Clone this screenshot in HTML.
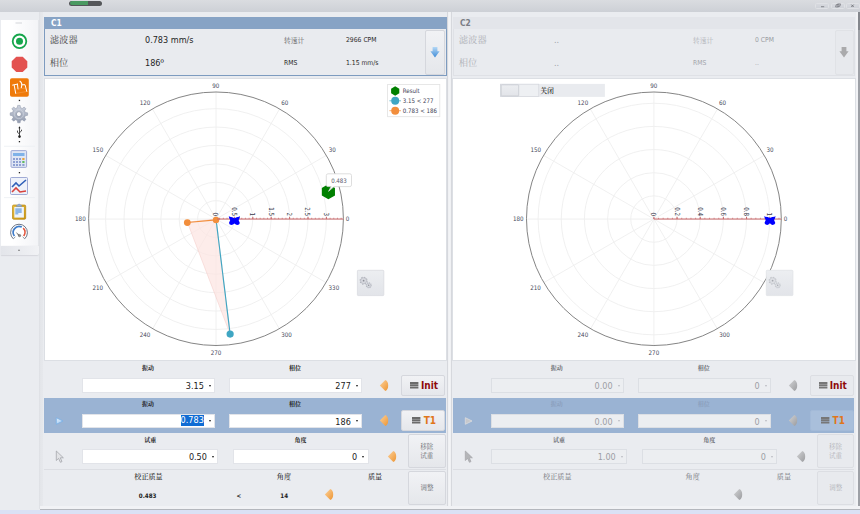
<!DOCTYPE html>
<html><head><meta charset="utf-8"><title>Balancing</title>
<style>
*{box-sizing:border-box;margin:0;padding:0}
html,body{width:860px;height:514px;overflow:hidden}
body{background:#eaecf0;font-family:"DejaVu Sans Condensed","Liberation Sans","Noto Serif CJK SC",sans-serif;font-size:10px;color:#1c1c1c;position:relative}
.abs{position:absolute}
.cjk{font-family:"Liberation Serif","Noto Serif CJK SC",serif}
#titlebar{left:0;top:0;width:860px;height:11.600px;background:linear-gradient(#dadce0,#cdd0d6)}
#pill{left:69px;top:0.900px;width:32.600px;height:4.900px;border-radius:2.500px;background:#55575a;overflow:hidden;box-shadow:0 0 1.500px #e4e6ea}
#pill i{position:absolute;left:0.800px;top:0.600px;width:18.300px;height:3.700px;background:#4b9a62;border-radius:2px 0 0 2px}
.wb{top:2.600px;height:6.300px;width:13.900px;border:0.800px solid #dfe1e5;border-radius:1.500px;background:linear-gradient(#d7d9de,#cfd2d8)}
#toolbar{left:1px;top:19.5px;width:37.500px;height:235.300px;border-radius:0 0 2px 0;background:linear-gradient(90deg,#ffffff 30%,#f3f4f7);border-right:1px solid #e4e6ea}
#tbfoot{left:1px;top:245.600px;width:37.500px;height:9.200px;background:linear-gradient(90deg,#e3e5ea,#f1f2f5);border-radius:0 0 2px 0;box-shadow:0 0.800px 1px #d6d8dd}
.panelhead{height:12.3px;font-weight:bold;font-size:8.400px;line-height:13.400px;overflow:hidden}
.lbl{font-size:9.3px;white-space:nowrap;color:#4a4a4a}
.val{font-size:9px;white-space:nowrap;color:#1f1f1f}
.sm{font-size:6.75px;white-space:nowrap;color:#2a2a2a}
.sm.cjk{color:#5e5e5e}
.chart{background:#fff;border:1px solid #dcdfe4}
.al{font-family:"DejaVu Sans Condensed","Liberation Sans",sans-serif;font-size:6.2px;fill:#45475a}
.rl{font-family:"DejaVu Sans Condensed","Liberation Sans",sans-serif;font-size:6.2px;fill:#383a4c}
.lg{font-family:"DejaVu Sans Condensed","Liberation Sans",sans-serif;font-size:6.1px;fill:#3d4054}
.inp{background:#fff;border:1px solid #e2e4e9;font-size:9px;line-height:14.400px;text-align:right;padding-right:10.400px;white-space:nowrap;color:#222}
.inp.dis{background:#eceef1;border-color:#dcdfe4;color:#9c9ea5}
.inp .dd{position:absolute;right:3.400px;top:5.800px;width:0;height:0;border-left:1.500px solid transparent;border-right:1.500px solid transparent;border-top:2.300px solid #1a1a1a}
.inp.dis .dd{border-top-color:#b9bbc1}
.sel{background:#0f6cd4;color:#fff;display:inline-block;height:10.800px;line-height:11.800px;margin-top:0.400px;vertical-align:top}
.rowlbl{font-size:6px;font-weight:bold;white-space:nowrap;transform:translateX(-50%);color:#222;line-height:10px}
.rowlbl.dis{color:#6c6e74}
.rowlbl.dis2{color:#8b9fbd}
.rowlbl2{font-size:7.100px;font-weight:500;white-space:nowrap;transform:translateX(-50%);color:#2e2e2e;line-height:11px}
.rowlbl2.dis{color:#85878d}
.btn{border:1px solid #d5d7dd;background:linear-gradient(#f1f2f5,#e5e7eb);border-radius:2px}
.btn.bdis{border-color:#dcdee3;background:#e8eaee}
.btn.bdis.t1{background:#a9bfdb;border-color:#a3bad8}
.btxt{font-weight:bold;font-size:10px;line-height:14px;white-space:nowrap}
.bsm{font-size:6.500px;line-height:8.500px;text-align:center;transform:translateX(-50%);white-space:nowrap}
.bold7{font-weight:bold;font-size:6.2px;line-height:9px;transform:translateX(-50%);white-space:nowrap;color:#222}
</style></head><body>
<svg width="0" height="0" style="position:absolute"><defs>
<linearGradient id="og" x1="0" y1="0" x2="1" y2="1"><stop offset="0" stop-color="#fdd29c"/><stop offset="1" stop-color="#ed9532"/></linearGradient>
<linearGradient id="gg" x1="0" y1="0" x2="1" y2="1"><stop offset="0" stop-color="#d2d3d5"/><stop offset="1" stop-color="#9b9c9f"/></linearGradient>
<linearGradient id="g1" x1="0" y1="0" x2="0" y2="1"><stop offset="0" stop-color="#b4d8f6"/><stop offset="1" stop-color="#3f8bd6"/></linearGradient>
<linearGradient id="pg" x1="0" y1="0" x2="0.6" y2="1"><stop offset="0" stop-color="#e6f1fc"/><stop offset="1" stop-color="#a9cdf2"/></linearGradient>
<linearGradient id="gearg" x1="0" y1="0" x2="0" y2="1"><stop offset="0" stop-color="#ccd2de"/><stop offset="1" stop-color="#929bae"/></linearGradient>
<linearGradient id="clipg" x1="0" y1="0" x2="1" y2="1"><stop offset="0" stop-color="#e7bd3c"/><stop offset="1" stop-color="#c8920f"/></linearGradient>
<linearGradient id="gbg" x1="0" y1="0" x2="0" y2="1"><stop offset="0" stop-color="#eceef1"/><stop offset="1" stop-color="#e2e4e9"/></linearGradient>
</defs></svg>
<div id="titlebar" class="abs"></div>
<div id="pill" class="abs"><i></i></div>
<div class="abs wb" style="left:815.400px"></div>
<div class="abs wb" style="left:830.700px"></div>
<div class="abs wb" style="left:845.900px;width:14.100px"></div>
<svg class="abs" style="left:815px;top:2px" width="45" height="8" viewBox="815 2 45 8">
<rect x="821" y="6.300" width="3.200" height="0.900" fill="#7a7c82"/>
<rect x="836" y="4.600" width="3" height="2.400" fill="none" stroke="#7a7c82" stroke-width="0.700" transform="skewX(-15) translate(1.4,0)"/>
<rect x="837.200" y="3.900" width="3" height="2.400" fill="none" stroke="#7a7c82" stroke-width="0.700" transform="skewX(-15) translate(1.4,0)"/>
<path d="M851.300,4.600 l2.400,2.400 m0,-2.400 l-2.400,2.400" stroke="#6e7076" stroke-width="0.900"/>
</svg>
<div class="abs" style="left:855.800px;top:12px;width:4.200px;height:498px;background:#f1f2f5"></div>
<div class="abs" style="left:858.300px;top:12px;width:1.500px;height:498px;background:#9da0a6"></div>
<div class="abs" style="left:858.300px;top:12px;width:1.500px;height:18px;background:#84878d"></div>

<div id="toolbar" class="abs"></div>
<div id="tbfoot" class="abs"></div>
<div class="abs" style="left:38.500px;top:12px;width:4.700px;height:497px;background:linear-gradient(90deg,#dddfe4,#e4e6ea 40%,#e6e8ec)"></div>
<div class="abs" style="left:446.800px;top:12px;width:5.700px;height:497px;background:linear-gradient(90deg,#d6d8dd 0,#d6d8dd 12%,#eff0f3 22%,#f3f4f6 50%,#eff0f3 78%,#d6d8dd 88%,#d6d8dd 100%)"></div>
<svg class="abs" style="left:0;top:17px" width="40" height="242" viewBox="0 17 40 242">
<rect x="15.500" y="22.500" width="6.500" height="1" fill="#d3d5da"/>
<!-- record -->
<circle cx="19.500" cy="41.300" r="6.800" fill="#fff" stroke="#16a64c" stroke-width="1.800"/>
<circle cx="19.500" cy="41.300" r="3.500" fill="#16a64c"/>
<!-- stop -->
<polygon points="16.300,56.700 22.700,56.700 27.300,61.200 27.300,67.600 22.700,72.100 16.300,72.100 11.700,67.600 11.700,61.200" fill="#e35250"/>
<!-- orange tool -->
<rect x="10" y="78.200" width="18.800" height="18.600" rx="1.800" fill="#ef7a0a"/>
<path d="M12.600,85.100 L17.600,84.100 M14.200,85.200 L15.700,93.400 M17.500,84.200 L18,89" stroke="#fff" stroke-width="1" fill="none" stroke-linecap="round"/><path d="M20,81.200 Q22.800,83 21.300,87.600" stroke="#fff" stroke-width="1.100" fill="none" stroke-linecap="round"/><path d="M21.800,84.800 L25,84.700 L26.800,91.500" stroke="#fff" stroke-width="1" fill="none" stroke-linecap="round" stroke-linejoin="round"/><path d="M15.700,93.400 L26.800,91.500 M18,89 L26,88" stroke="#f9b877" stroke-width="0.500" fill="none" opacity="0.700"/>
<rect x="18.800" y="99.800" width="1.300" height="1.300" fill="#222"/>
<!-- gear -->
<g transform="translate(18.900,114.100)">
<path d="M-1.59,-6.41 L-1.24,-8.71 L1.24,-8.71 L1.59,-6.41 L3.40,-5.65 L5.28,-7.04 L7.04,-5.28 L5.65,-3.40 L6.41,-1.59 L8.71,-1.24 L8.71,1.24 L6.41,1.59 L5.65,3.40 L7.04,5.28 L5.28,7.04 L3.40,5.65 L1.59,6.41 L1.24,8.71 L-1.24,8.71 L-1.59,6.41 L-3.40,5.65 L-5.28,7.04 L-7.04,5.28 L-5.65,3.40 L-6.41,1.59 L-8.71,1.24 L-8.71,-1.24 L-6.41,-1.59 L-5.65,-3.40 L-7.04,-5.28 L-5.28,-7.04 L-3.40,-5.65Z" fill="url(#gearg)" stroke="#8b93a6" stroke-width="0.500" stroke-linejoin="round"/>
<circle r="4.600" fill="none" stroke="#d6dae3" stroke-width="0.800" opacity="0.700"/>
<circle r="2.500" fill="#fbfbfd" stroke="#818a9c" stroke-width="0.700"/>
</g>
<!-- usb -->
<path d="M19.500,127.500 v8.500 M19.500,134 l-2,-1.600 v-1.800 M19.500,132.600 l2,-1.600 v-1.300" stroke="#222" stroke-width="0.800" fill="none"/>
<circle cx="19.500" cy="136.600" r="1.300" fill="#222"/>
<polygon points="18.400,128.300 20.600,128.300 19.500,126.200" fill="#222"/>
<rect x="18.800" y="141" width="1.300" height="1.300" fill="#222"/>
<rect x="4" y="145.800" width="31" height="0.800" fill="#eceef2"/>
<!-- calculator -->
<rect x="11" y="150.600" width="15.600" height="16.800" rx="1" fill="#dfe6f4" stroke="#8b98cb" stroke-width="0.800"/>
<rect x="13" y="153" width="11.500" height="3" fill="#7fb2e8"/>
<g fill="#8ea0d2"><rect x="13" y="158" width="2" height="2"/><rect x="16" y="158" width="2" height="2"/><rect x="19" y="158" width="2" height="2"/>
<rect x="13" y="161" width="2" height="2"/><rect x="16" y="161" width="2" height="2"/><rect x="19" y="161" width="2" height="2"/>
<rect x="13" y="164" width="2" height="2"/><rect x="16" y="164" width="2" height="2"/><rect x="19" y="164" width="2" height="2"/></g>
<rect x="22.300" y="158" width="2.200" height="2" fill="#e8a33a"/><rect x="22.300" y="161" width="2.200" height="2" fill="#5fba5f"/><rect x="22.300" y="164" width="2.200" height="2" fill="#8ea0d2"/>
<rect x="18.800" y="172" width="1.300" height="1.300" fill="#222"/>
<!-- chart icon -->
<rect x="10.500" y="177.500" width="17" height="17" rx="1" fill="#eef2fa" stroke="#8b98cb" stroke-width="0.800"/>
<path d="M12,187 L16,183 L19,186 L26,180" stroke="#2e5fb8" stroke-width="1.600" fill="none"/>
<path d="M12,192 L16,188 L20,192 L26,191" stroke="#d8423d" stroke-width="1.600" fill="none"/>
<rect x="4" y="197.300" width="31" height="0.800" fill="#eceef2"/>
<!-- clipboard -->
<rect x="12.500" y="205" width="13.200" height="14.300" rx="1.200" fill="url(#clipg)" stroke="#b98a14" stroke-width="0.700"/>
<rect x="14.300" y="207" width="9.600" height="10.600" fill="#eef4fb"/>
<path d="M15.300,208.300 h6.400 v4.600 h-3.400 v1.600 h-3 Z" fill="#8db7e8"/>
<path d="M16.200,206.600 q0,-1.400 1.400,-1.600 q1.500,-2.200 3,0 q1.400,0.200 1.400,1.600 Z" fill="#90abd6" stroke="#6d8cc0" stroke-width="0.400"/>
<!-- gauge -->
<path d="M13.300,238.800 A8.400,8.400 0 1 1 24.700,238.800" fill="#fff" stroke="#6f7786" stroke-width="1"/>
<path d="M13.300,238.800 L15.400,236.800 M24.700,238.800 L22.600,236.800" stroke="#6f7786" stroke-width="0.800"/>
<path d="M14.400,236 A6,6 0 0 1 21.800,227" stroke="#3f7cc9" stroke-width="1.700" fill="none"/>
<path d="M23.200,228.100 A6,6 0 0 1 23.700,236" stroke="#e2553d" stroke-width="1.700" fill="none"/>
<path d="M15.600,231.800 L20.200,235.400 L18.900,236.500 Z" fill="#6b6b6b"/>
<circle cx="19.600" cy="235.600" r="1.200" fill="#8a8a8a" stroke="#555" stroke-width="0.400"/>
<rect x="18.400" y="249.700" width="1.200" height="1.200" fill="#555"/>
</svg>

<!-- C1 panel -->
<div class="abs" style="left:44px;top:17px;width:402.500px;height:58.700px;background:#e9ebef;border:1px solid #7d9bbf"></div>
<div class="abs panelhead" style="left:44px;top:17px;width:402.500px;background:#87a3c5;color:#fff;padding-left:7px">C1</div>
<div class="abs lbl cjk" style="left:49.800px;top:32.200px">滤波器</div>
<div class="abs lbl cjk" style="left:49.800px;top:55.200px">相位</div>
<div class="abs val" style="left:145px;top:34.800px">0.783 mm/s</div>
<div class="abs val" style="left:145px;top:57.800px">186<span style="font-family:'Liberation Sans',sans-serif">º</span></div>
<div class="abs sm cjk" style="left:284px;top:34.600px">转速计</div>
<div class="abs sm" style="left:284px;top:59px">RMS</div>
<div class="abs sm" style="left:346px;top:36px">2966 CPM</div>
<div class="abs sm" style="left:346px;top:59px">1.15 mm/s</div>
<div class="abs btn" style="left:425.300px;top:30px;width:19.400px;height:44.500px"></div>
<svg class="abs" style="left:429.200px;top:45.500px" width="12" height="13" viewBox="0 0 12 13"><path d="M3.600,1 h4.800 v4.300 h2.200 L6,11.500 L1.400,5.300 h2.200 Z" fill="url(#g1)"/></svg>

<!-- C2 panel -->
<div class="abs" style="left:453px;top:17px;width:402.300px;height:58.700px;background:#e9ebef;border:1px solid #dfe1e6"></div>
<div class="abs panelhead" style="left:453px;top:17px;width:402.300px;background:#e3e5ea;color:#7a7d85;padding-left:7px">C2</div>
<div class="abs lbl cjk" style="left:458.800px;top:32.200px;color:#b0b2b8">滤波器</div>
<div class="abs lbl cjk" style="left:458.800px;top:55.200px;color:#b0b2b8">相位</div>
<div class="abs val" style="left:554px;top:34.800px;color:#a0a2a8">..</div>
<div class="abs val" style="left:554px;top:57.800px;color:#a0a2a8">..</div>
<div class="abs sm cjk" style="left:693px;top:34.600px;color:#b0b2b8">转速计</div>
<div class="abs sm" style="left:693px;top:59px;color:#a4a6ac">RMS</div>
<div class="abs sm" style="left:755px;top:36px;color:#9a9ca2">0 CPM</div>
<div class="abs sm" style="left:755px;top:59px;color:#a4a6ac">..</div>
<div class="abs btn" style="left:834.700px;top:30.200px;width:19.600px;height:44.600px;border-color:#e0e2e6;background:#e7e9ed"></div>
<svg class="abs" style="left:838px;top:45.500px" width="12" height="13" viewBox="0 0 12 13"><path d="M3.600,1 h4.800 v4.300 h2.200 L6,11.500 L1.400,5.300 h2.200 Z" fill="#aaaaac"/></svg>

<!-- charts -->
<div class="abs chart" style="left:43.700px;top:78px;width:403.500px;height:282.600px"></div>
<svg class="abs" style="left:44px;top:79px" width="402" height="281" viewBox="0 0 402 281">
<line x1="172" y1="140.05" x2="299.4" y2="140.05" stroke="#eeeeee" stroke-width="0.9"/>
<line x1="172" y1="140.05" x2="282.33" y2="76.35" stroke="#eeeeee" stroke-width="0.9"/>
<line x1="172" y1="140.05" x2="235.7" y2="29.72" stroke="#eeeeee" stroke-width="0.9"/>
<line x1="172" y1="140.05" x2="172" y2="12.65" stroke="#eeeeee" stroke-width="0.9"/>
<line x1="172" y1="140.05" x2="108.3" y2="29.72" stroke="#eeeeee" stroke-width="0.9"/>
<line x1="172" y1="140.05" x2="61.67" y2="76.35" stroke="#eeeeee" stroke-width="0.9"/>
<line x1="172" y1="140.05" x2="44.6" y2="140.05" stroke="#eeeeee" stroke-width="0.9"/>
<line x1="172" y1="140.05" x2="61.67" y2="203.75" stroke="#eeeeee" stroke-width="0.9"/>
<line x1="172" y1="140.05" x2="108.3" y2="250.38" stroke="#eeeeee" stroke-width="0.9"/>
<line x1="172" y1="140.05" x2="172" y2="267.45" stroke="#eeeeee" stroke-width="0.9"/>
<line x1="172" y1="140.05" x2="235.7" y2="250.38" stroke="#eeeeee" stroke-width="0.9"/>
<line x1="172" y1="140.05" x2="282.33" y2="203.75" stroke="#eeeeee" stroke-width="0.9"/>
<circle cx="172" cy="140.05" r="18.4" fill="none" stroke="#eeeeee" stroke-width="0.9"/>
<circle cx="172" cy="140.05" r="36.8" fill="none" stroke="#eeeeee" stroke-width="0.9"/>
<circle cx="172" cy="140.05" r="55.2" fill="none" stroke="#eeeeee" stroke-width="0.9"/>
<circle cx="172" cy="140.05" r="73.6" fill="none" stroke="#eeeeee" stroke-width="0.9"/>
<circle cx="172" cy="140.05" r="92" fill="none" stroke="#eeeeee" stroke-width="0.9"/>
<circle cx="172" cy="140.05" r="110.4" fill="none" stroke="#eeeeee" stroke-width="0.9"/>
<ellipse cx="172" cy="139.75" rx="127.4" ry="126.75" fill="none" stroke="#858585" stroke-width="1"/>
<polygon points="172,140.05 143.34,143.06 186.13,255.11" fill="#fce4e1" fill-opacity="0.7" stroke="#f3c9c4" stroke-width="0.5"/>
<line x1="172" y1="140.05" x2="299.4" y2="140.05" stroke="#c9696b" stroke-width="1"/>
<path d="M172,138.75V140.05M175.68,138.75V140.05M179.36,138.75V140.05M183.04,138.75V140.05M186.72,138.75V140.05M190.4,138.75V140.05M194.08,138.75V140.05M197.76,138.75V140.05M201.44,138.75V140.05M205.12,138.75V140.05M208.8,138.75V140.05M212.48,138.75V140.05M216.16,138.75V140.05M219.84,138.75V140.05M223.52,138.75V140.05M227.2,138.75V140.05M230.88,138.75V140.05M234.56,138.75V140.05M238.24,138.75V140.05M241.92,138.75V140.05M245.6,138.75V140.05M249.28,138.75V140.05M252.96,138.75V140.05M256.64,138.75V140.05M260.32,138.75V140.05M264,138.75V140.05M267.68,138.75V140.05M271.36,138.75V140.05M275.04,138.75V140.05M278.72,138.75V140.05M282.4,138.75V140.05M286.08,138.75V140.05M289.76,138.75V140.05M293.44,138.75V140.05M297.12,138.75V140.05" stroke="#c9696b" stroke-width="0.7" fill="none"/>
<line x1="172" y1="137.85" x2="172" y2="140.05" stroke="#c9696b" stroke-width="1"/>
<text transform="translate(169.45,137.05) rotate(90) scale(1,1.12)" text-anchor="end" class="rl">0</text>
<line x1="190.4" y1="137.85" x2="190.4" y2="140.05" stroke="#c9696b" stroke-width="1"/>
<text transform="translate(187.85,137.05) rotate(90) scale(1,1.12)" text-anchor="end" class="rl">0.5</text>
<line x1="208.8" y1="137.85" x2="208.8" y2="140.05" stroke="#c9696b" stroke-width="1"/>
<text transform="translate(206.25,137.05) rotate(90) scale(1,1.12)" text-anchor="end" class="rl">1</text>
<line x1="227.2" y1="137.85" x2="227.2" y2="140.05" stroke="#c9696b" stroke-width="1"/>
<text transform="translate(224.65,137.05) rotate(90) scale(1,1.12)" text-anchor="end" class="rl">1.5</text>
<line x1="245.6" y1="137.85" x2="245.6" y2="140.05" stroke="#c9696b" stroke-width="1"/>
<text transform="translate(243.05,137.05) rotate(90) scale(1,1.12)" text-anchor="end" class="rl">2</text>
<line x1="264" y1="137.85" x2="264" y2="140.05" stroke="#c9696b" stroke-width="1"/>
<text transform="translate(261.45,137.05) rotate(90) scale(1,1.12)" text-anchor="end" class="rl">2.5</text>
<line x1="282.4" y1="137.85" x2="282.4" y2="140.05" stroke="#c9696b" stroke-width="1"/>
<text transform="translate(279.85,137.05) rotate(90) scale(1,1.12)" text-anchor="end" class="rl">3</text>
<line x1="172" y1="140.05" x2="186.13" y2="255.11" stroke="#3fa6c3" stroke-width="1.15"/>
<circle cx="186.13" cy="255.11" r="3.6" fill="#3fa6c3"/>
<line x1="172" y1="140.85" x2="143.34" y2="143.56" stroke="#f28e3c" stroke-width="1.1"/>
<circle cx="143.34" cy="143.56" r="3.4" fill="#f28e3c"/>
<circle cx="172" cy="140.95" r="3.2" fill="#f28e3c"/>
<line x1="173" y1="140.05" x2="176" y2="140.05" stroke="#c9696b" stroke-width="1"/>
<polygon points="184.8,137 185.8,137.8 188.2,138.2 190.4,139.2 192.6,138.2 195,137.8 196,137 195.6,139.2 194.6,141 195.8,144 195,145.4 193.2,146 191.8,145.6 190.4,144.4 189,145.6 187.6,146 185.8,145.4 185,144 186.2,141 185.2,139.2" fill="#0000ff"/>
<polygon points="284.4,105.1 277.82,108.9 277.82,116.5 284.4,120.3 290.98,116.5 290.98,108.9" fill="#008000"/>
<text x="303.5" y="142.1" text-anchor="middle" class="al">0</text>
<text x="288.2" y="73.4" text-anchor="middle" class="al">30</text>
<text x="240.7" y="26.1" text-anchor="middle" class="al">60</text>
<text x="171.8" y="9" text-anchor="middle" class="al">90</text>
<text x="101" y="26.1" text-anchor="middle" class="al">120</text>
<text x="53.9" y="73.4" text-anchor="middle" class="al">150</text>
<text x="36.4" y="142.1" text-anchor="middle" class="al">180</text>
<text x="53.7" y="210.8" text-anchor="middle" class="al">210</text>
<text x="101" y="258.1" text-anchor="middle" class="al">240</text>
<text x="172" y="275.5" text-anchor="middle" class="al">270</text>
<text x="242.6" y="258.1" text-anchor="middle" class="al">300</text>
<text x="289.9" y="210.8" text-anchor="middle" class="al">330</text>
<!-- tooltip -->
<path d="M284,94.800 h21.800 q1.700,0 1.700,1.700 v9.400 q0,1.700 -1.700,1.700 h-15.800 L284.600,112.300 L287.200,107.600 h-3.200 q-1.700,0 -1.700,-1.700 v-9.400 q0,-1.700 1.700,-1.700 Z" fill="#fff" stroke="#d6d6d6" stroke-width="0.800"/>
<text x="295" y="103.500" text-anchor="middle" class="lg" style="fill:#5a5d6e">0.483</text>
<!-- legend -->
<rect x="343.600" y="5.400" width="52.200" height="32.300" fill="#fff" stroke="#e2e2e2" stroke-width="0.800"/>
<polygon points="351.200,7.300 355.300,9.650 355.300,14.350 351.200,16.700 347.100,14.350 347.100,9.650" fill="#008000"/>
<text x="358.800" y="14.200" class="lg">Result</text>
<line x1="345.400" y1="21.800" x2="357" y2="21.800" stroke="#3fa6c3" stroke-width="0.700"/><circle cx="351.200" cy="21.800" r="4" fill="#3fa6c3"/>
<text x="358.800" y="24.100" class="lg">3.15 &lt; 277</text>
<line x1="345.400" y1="31.700" x2="357" y2="31.700" stroke="#f28e3c" stroke-width="0.700"/><circle cx="351.200" cy="31.700" r="4" fill="#f28e3c"/>
<text x="358.800" y="34" class="lg">0.783 &lt; 186</text>
<!-- gears button -->
<rect x="313.400" y="191.300" width="26.400" height="25.300" rx="0.800" fill="url(#gbg)" stroke="#d9dbe0" stroke-width="0.800"/>
<g fill="#d9dbe1" stroke="#b3b6be"><circle cx="319.600" cy="201.700" r="3.400" stroke-width="1.300" stroke-dasharray="1.300 1.370"/><circle cx="319.600" cy="201.700" r="2.900" stroke-width="0.600"/><circle cx="324.700" cy="206.300" r="2.500" stroke-width="1.100" stroke-dasharray="1 0.960"/><circle cx="324.700" cy="206.300" r="2.100" stroke-width="0.500"/></g>
<circle cx="319.600" cy="201.700" r="0.900" fill="#8d9098"/><circle cx="324.700" cy="206.300" r="0.700" fill="#8d9098"/>
</svg>

<div class="abs chart" style="left:452.300px;top:78px;width:403.700px;height:282.600px"></div>
<svg class="abs" style="left:453px;top:79px" width="402" height="281" viewBox="0 0 402 281">
<line x1="200.9" y1="140.05" x2="328.3" y2="140.05" stroke="#eeeeee" stroke-width="0.9"/>
<line x1="200.9" y1="140.05" x2="311.23" y2="76.35" stroke="#eeeeee" stroke-width="0.9"/>
<line x1="200.9" y1="140.05" x2="264.6" y2="29.72" stroke="#eeeeee" stroke-width="0.9"/>
<line x1="200.9" y1="140.05" x2="200.9" y2="12.65" stroke="#eeeeee" stroke-width="0.9"/>
<line x1="200.9" y1="140.05" x2="137.2" y2="29.72" stroke="#eeeeee" stroke-width="0.9"/>
<line x1="200.9" y1="140.05" x2="90.57" y2="76.35" stroke="#eeeeee" stroke-width="0.9"/>
<line x1="200.9" y1="140.05" x2="73.5" y2="140.05" stroke="#eeeeee" stroke-width="0.9"/>
<line x1="200.9" y1="140.05" x2="90.57" y2="203.75" stroke="#eeeeee" stroke-width="0.9"/>
<line x1="200.9" y1="140.05" x2="137.2" y2="250.38" stroke="#eeeeee" stroke-width="0.9"/>
<line x1="200.9" y1="140.05" x2="200.9" y2="267.45" stroke="#eeeeee" stroke-width="0.9"/>
<line x1="200.9" y1="140.05" x2="264.6" y2="250.38" stroke="#eeeeee" stroke-width="0.9"/>
<line x1="200.9" y1="140.05" x2="311.23" y2="203.75" stroke="#eeeeee" stroke-width="0.9"/>
<circle cx="200.9" cy="140.05" r="23.16" fill="none" stroke="#eeeeee" stroke-width="0.9"/>
<circle cx="200.9" cy="140.05" r="46.32" fill="none" stroke="#eeeeee" stroke-width="0.9"/>
<circle cx="200.9" cy="140.05" r="69.48" fill="none" stroke="#eeeeee" stroke-width="0.9"/>
<circle cx="200.9" cy="140.05" r="92.64" fill="none" stroke="#eeeeee" stroke-width="0.9"/>
<circle cx="200.9" cy="140.05" r="115.8" fill="none" stroke="#eeeeee" stroke-width="0.9"/>
<ellipse cx="200.9" cy="139.75" rx="127.4" ry="126.75" fill="none" stroke="#858585" stroke-width="1"/>
<line x1="200.9" y1="140.05" x2="328.3" y2="140.05" stroke="#c9696b" stroke-width="1"/>
<path d="M200.9,138.75V140.05M205.53,138.75V140.05M210.16,138.75V140.05M214.8,138.75V140.05M219.43,138.75V140.05M224.06,138.75V140.05M228.69,138.75V140.05M233.32,138.75V140.05M237.96,138.75V140.05M242.59,138.75V140.05M247.22,138.75V140.05M251.85,138.75V140.05M256.48,138.75V140.05M261.12,138.75V140.05M265.75,138.75V140.05M270.38,138.75V140.05M275.01,138.75V140.05M279.64,138.75V140.05M284.28,138.75V140.05M288.91,138.75V140.05M293.54,138.75V140.05M298.17,138.75V140.05M302.8,138.75V140.05M307.44,138.75V140.05M312.07,138.75V140.05M316.7,138.75V140.05M321.33,138.75V140.05M325.96,138.75V140.05" stroke="#c9696b" stroke-width="0.7" fill="none"/>
<line x1="200.9" y1="137.85" x2="200.9" y2="140.05" stroke="#c9696b" stroke-width="1"/>
<text transform="translate(198.35,137.05) rotate(90) scale(1,1.12)" text-anchor="end" class="rl">0</text>
<line x1="224.06" y1="137.85" x2="224.06" y2="140.05" stroke="#c9696b" stroke-width="1"/>
<text transform="translate(221.51,137.05) rotate(90) scale(1,1.12)" text-anchor="end" class="rl">0.2</text>
<line x1="247.22" y1="137.85" x2="247.22" y2="140.05" stroke="#c9696b" stroke-width="1"/>
<text transform="translate(244.67,137.05) rotate(90) scale(1,1.12)" text-anchor="end" class="rl">0.4</text>
<line x1="270.38" y1="137.85" x2="270.38" y2="140.05" stroke="#c9696b" stroke-width="1"/>
<text transform="translate(267.83,137.05) rotate(90) scale(1,1.12)" text-anchor="end" class="rl">0.6</text>
<line x1="293.54" y1="137.85" x2="293.54" y2="140.05" stroke="#c9696b" stroke-width="1"/>
<text transform="translate(290.99,137.05) rotate(90) scale(1,1.12)" text-anchor="end" class="rl">0.8</text>
<line x1="316.7" y1="137.85" x2="316.7" y2="140.05" stroke="#c9696b" stroke-width="1"/>
<text transform="translate(314.15,137.05) rotate(90) scale(1,1.12)" text-anchor="end" class="rl">1</text>
<polygon points="311.3,136.9 312.3,137.7 314.7,138.1 316.9,139.1 319.1,138.1 321.5,137.7 322.5,136.9 322.1,139.1 321.1,140.9 322.3,143.9 321.5,145.3 319.7,145.9 318.3,145.5 316.9,144.3 315.5,145.5 314.1,145.9 312.3,145.3 311.5,143.9 312.7,140.9 311.7,139.1" fill="#0000ff"/>
<text x="332.4" y="142.1" text-anchor="middle" class="al">0</text>
<text x="317.1" y="73.4" text-anchor="middle" class="al">30</text>
<text x="269.6" y="26.1" text-anchor="middle" class="al">60</text>
<text x="200.7" y="9" text-anchor="middle" class="al">90</text>
<text x="129.9" y="26.1" text-anchor="middle" class="al">120</text>
<text x="82.8" y="73.4" text-anchor="middle" class="al">150</text>
<text x="65.3" y="142.1" text-anchor="middle" class="al">180</text>
<text x="82.6" y="210.8" text-anchor="middle" class="al">210</text>
<text x="129.9" y="258.1" text-anchor="middle" class="al">240</text>
<text x="200.9" y="275.5" text-anchor="middle" class="al">270</text>
<text x="271.5" y="258.1" text-anchor="middle" class="al">300</text>
<text x="318.8" y="210.8" text-anchor="middle" class="al">330</text>
<rect x="47.300" y="4.900" width="104.600" height="13" fill="#e9ebef"/>
<rect x="47.600" y="5.200" width="38.200" height="12.400" fill="#eef0f3" stroke="#d3d6dc" stroke-width="0.700"/>
<rect x="48.200" y="5.800" width="17.500" height="11.200" rx="0.600" fill="url(#gbg)" stroke="#c3c6cd" stroke-width="0.700"/>
<text x="87.600" y="14.300" style="font-family:'Liberation Serif','Noto Serif CJK SC',serif;font-size:6.600px;font-weight:600;fill:#262626">关闭</text>
<rect x="313.300" y="191.300" width="26.600" height="25.300" rx="0.800" fill="url(#gbg)" stroke="#e0e2e6" stroke-width="0.800"/>
<g fill="#dfe1e5" stroke="#c3c6cc"><circle cx="319.600" cy="201.700" r="3.400" stroke-width="1.300" stroke-dasharray="1.300 1.370"/><circle cx="319.600" cy="201.700" r="2.900" stroke-width="0.600"/><circle cx="324.700" cy="206.300" r="2.500" stroke-width="1.100" stroke-dasharray="1 0.960"/><circle cx="324.700" cy="206.300" r="2.100" stroke-width="0.500"/></g>
<circle cx="319.600" cy="201.700" r="0.900" fill="#a5a8af"/><circle cx="324.700" cy="206.300" r="0.700" fill="#a5a8af"/>
</svg>

<div class="abs" style="left:44px;top:398px;width:402px;height:34.5px;background:#9ab3d3"></div>
<div class="abs" style="left:44px;top:469px;width:402px;height:1px;background:#dcdee3"></div>
<div class="abs cjk rowlbl" style="left:147.9px;top:363.3px">振动</div>
<div class="abs cjk rowlbl" style="left:295px;top:363.3px">相位</div>
<div class="abs cjk rowlbl" style="left:147.9px;top:398.7px">振动</div>
<div class="abs cjk rowlbl" style="left:295px;top:398.7px">相位</div>
<div class="abs cjk rowlbl" style="left:150.3px;top:434.8px">试重</div>
<div class="abs cjk rowlbl" style="left:300.5px;top:434.8px">角度</div>
<div class="abs cjk rowlbl2" style="left:148.5px;top:472.1px">校正质量</div>
<div class="abs cjk rowlbl2" style="left:283.9px;top:472.3px">角度</div>
<div class="abs cjk rowlbl2" style="left:375.1px;top:472.3px">质量</div>
<div class="abs inp" style="left:81.7px;top:378.3px;width:133.5px;height:14.5px">3.15<i class="dd"></i></div>
<div class="abs inp" style="left:229px;top:378.3px;width:133.2px;height:14.5px">277<i class="dd"></i></div>
<div class="abs inp" style="left:81.7px;top:413.5px;width:133.5px;height:14.5px"><span class="sel">0.783</span><i class="dd"></i></div>
<div class="abs inp" style="left:229px;top:413.5px;width:133.2px;height:14.5px">186<i class="dd"></i></div>
<div class="abs inp" style="left:82.3px;top:449px;width:136px;height:14.5px">0.50<i class="dd"></i></div>
<div class="abs inp" style="left:233.3px;top:449px;width:135.3px;height:14.5px">0<i class="dd"></i></div>
<svg class="abs" style="left:379.3px;top:379px" width="10" height="13" viewBox="-5 -6.5 10 13"><path d="M-4.2,0 L1.3,-5.4 C3.2,-5 4.2,-2.6 4.2,0 C4.2,2.6 3.2,5 1.3,5.4 Z" fill="url(#og)"/></svg>
<svg class="abs" style="left:379.3px;top:414.3px" width="10" height="13" viewBox="-5 -6.5 10 13"><path d="M-4.2,0 L1.3,-5.4 C3.2,-5 4.2,-2.6 4.2,0 C4.2,2.6 3.2,5 1.3,5.4 Z" fill="url(#og)"/></svg>
<svg class="abs" style="left:386.7px;top:449.9px" width="10" height="13" viewBox="-5 -6.5 10 13"><path d="M-4.2,0 L1.3,-5.4 C3.2,-5 4.2,-2.6 4.2,0 C4.2,2.6 3.2,5 1.3,5.4 Z" fill="url(#og)"/></svg>
<svg class="abs" style="left:324.4px;top:487.9px" width="10" height="13" viewBox="-5 -6.5 10 13"><path d="M-4.2,0 L1.3,-5.4 C3.2,-5 4.2,-2.6 4.2,0 C4.2,2.6 3.2,5 1.3,5.4 Z" fill="url(#og)"/></svg>
<svg class="abs" style="left:55px;top:415.5px" width="10" height="10" viewBox="0 0 10 10"><path d="M1.3,1.7 L8,5 L1.3,8.300 Z" fill="url(#pg)" stroke="#79b0e6" stroke-width="0.800" stroke-linejoin="round"/></svg>
<svg class="abs" style="left:55px;top:449.5px" width="11" height="14" viewBox="0 0 11 14"><path d="M1.3,1 L1.3,10.5 L3.6,8.4 L5.4,12.3 L7,11.6 L5.3,7.8 L8.4,7.8 Z" fill="#e2e3e6" stroke="#9c9ea3" stroke-width="0.7" stroke-linejoin="round"/></svg>
<div class="abs btn" style="left:401.3px;top:374.8px;width:44.2px;height:21.4px"></div>
<div class="abs btn t1" style="left:401.3px;top:410.2px;width:44.2px;height:21.2px"></div>
<div class="abs btn" style="left:407.9px;top:434.300px;width:37.8px;height:33.300px"></div>
<div class="abs btn" style="left:407.9px;top:471.2px;width:37.8px;height:33.6px"></div>
<svg class="abs" style="left:409.8px;top:382px" width="9" height="7" viewBox="0 0 9 7"><path d="M0,1H8.4M0,3.3H8.4M0,5.600H8.4" stroke="#6b6b6b" stroke-width="1.9"/></svg>
<svg class="abs" style="left:412px;top:417.2px" width="9" height="7" viewBox="0 0 9 7"><path d="M0,1H8.4M0,3.3H8.4M0,5.600H8.4" stroke="#6b6b6b" stroke-width="1.9"/></svg>
<div class="abs btxt" style="left:420.9px;top:378.5px;color:#8f0a0a">Init</div>
<div class="abs btxt" style="left:423.7px;top:413.8px;color:#e0761a">T1</div>
<div class="abs cjk bsm" style="left:426.8px;top:443.200px;color:#6d6f75">移除<br>试重</div>
<div class="abs cjk bsm" style="left:427px;top:484.400px;color:#6d6f75">调整</div>
<div class="abs bold7" style="left:147.6px;top:490.5px">0.483</div>
<div class="abs bold7" style="left:238.9px;top:490.5px">&lt;</div>
<div class="abs bold7" style="left:284.2px;top:490.5px">14</div>
<div class="abs" style="left:452.8px;top:398px;width:401.6px;height:34.5px;background:#9ab3d3"></div>
<div class="abs" style="left:452.8px;top:469px;width:401.6px;height:1px;background:#dcdee3"></div>
<div class="abs cjk rowlbl dis" style="left:556.7px;top:363.3px">振动</div>
<div class="abs cjk rowlbl dis" style="left:703.8px;top:363.3px">相位</div>
<div class="abs cjk rowlbl dis dis2" style="left:556.7px;top:398.7px">振动</div>
<div class="abs cjk rowlbl dis dis2" style="left:703.8px;top:398.7px">相位</div>
<div class="abs cjk rowlbl dis" style="left:559.1px;top:434.8px">试重</div>
<div class="abs cjk rowlbl dis" style="left:709.3px;top:434.8px">角度</div>
<div class="abs cjk rowlbl2 dis" style="left:557.3px;top:472.1px">校正质量</div>
<div class="abs cjk rowlbl2 dis" style="left:692.7px;top:472.3px">角度</div>
<div class="abs cjk rowlbl2 dis" style="left:783.9px;top:472.3px">质量</div>
<div class="abs inp dis" style="left:490.5px;top:378.3px;width:133.5px;height:14.5px">0.00<i class="dd"></i></div>
<div class="abs inp dis" style="left:637.8px;top:378.3px;width:133.2px;height:14.5px">0<i class="dd"></i></div>
<div class="abs inp dis" style="left:490.5px;top:413.5px;width:133.5px;height:14.5px">0.00<i class="dd"></i></div>
<div class="abs inp dis" style="left:637.8px;top:413.5px;width:133.2px;height:14.5px">0<i class="dd"></i></div>
<div class="abs inp dis" style="left:491.1px;top:449px;width:136px;height:14.5px">1.00<i class="dd"></i></div>
<div class="abs inp dis" style="left:642.1px;top:449px;width:135.3px;height:14.5px">0<i class="dd"></i></div>
<svg class="abs" style="left:788.1px;top:379px" width="10" height="13" viewBox="-5 -6.5 10 13"><path d="M-4.2,0 L1.3,-5.4 C3.2,-5 4.2,-2.6 4.2,0 C4.2,2.6 3.2,5 1.3,5.4 Z" fill="url(#gg)"/></svg>
<svg class="abs" style="left:788.1px;top:414.3px" width="10" height="13" viewBox="-5 -6.5 10 13"><path d="M-4.2,0 L1.3,-5.4 C3.2,-5 4.2,-2.6 4.2,0 C4.2,2.6 3.2,5 1.3,5.4 Z" fill="url(#gg)"/></svg>
<svg class="abs" style="left:795.5px;top:449.9px" width="10" height="13" viewBox="-5 -6.5 10 13"><path d="M-4.2,0 L1.3,-5.4 C3.2,-5 4.2,-2.6 4.2,0 C4.2,2.6 3.2,5 1.3,5.4 Z" fill="url(#gg)"/></svg>
<svg class="abs" style="left:733.2px;top:487.9px" width="10" height="13" viewBox="-5 -6.5 10 13"><path d="M-4.2,0 L1.3,-5.4 C3.2,-5 4.2,-2.6 4.2,0 C4.2,2.6 3.2,5 1.3,5.4 Z" fill="url(#gg)"/></svg>
<svg class="abs" style="left:463.8px;top:415.5px" width="10" height="10" viewBox="0 0 10 10"><path d="M1.3,1.7 L8,5 L1.3,8.300 Z" fill="#c6c8cc" stroke="#dcdde0" stroke-width="0.800" stroke-linejoin="round"/></svg>
<svg class="abs" style="left:463.8px;top:449.5px" width="11" height="14" viewBox="0 0 11 14"><path d="M1.3,1 L1.3,10.5 L3.6,8.4 L5.4,12.3 L7,11.6 L5.3,7.8 L8.4,7.8 Z" fill="#b4b5b8" stroke="#a3a4a8" stroke-width="0.7" stroke-linejoin="round"/></svg>
<div class="abs btn bdis" style="left:810.1px;top:374.8px;width:44.2px;height:21.4px"></div>
<div class="abs btn bdis t1" style="left:810.1px;top:410.2px;width:44.2px;height:21.2px"></div>
<div class="abs btn bdis" style="left:816.7px;top:434.300px;width:37.8px;height:33.300px"></div>
<div class="abs btn bdis" style="left:816.7px;top:471.2px;width:37.8px;height:33.6px"></div>
<svg class="abs" style="left:818.6px;top:382px" width="9" height="7" viewBox="0 0 9 7"><path d="M0,1H8.4M0,3.3H8.4M0,5.600H8.4" stroke="#777" stroke-width="1.9"/></svg>
<svg class="abs" style="left:820.8px;top:417.2px" width="9" height="7" viewBox="0 0 9 7"><path d="M0,1H8.4M0,3.3H8.4M0,5.600H8.4" stroke="#777" stroke-width="1.9"/></svg>
<div class="abs btxt" style="left:829.7px;top:378.5px;color:#8f0a0a">Init</div>
<div class="abs btxt" style="left:832.5px;top:413.8px;color:#e0761a">T1</div>
<div class="abs cjk bsm" style="left:835.6px;top:443.200px;color:#b3b5ba">移除<br>试重</div>
<div class="abs cjk bsm" style="left:835.8px;top:484.400px;color:#b3b5ba">调整</div>
<div class="abs" style="left:40px;top:506.300px;width:820px;height:2.500px;background:#f1f2f5"></div>
<div class="abs" style="left:40px;top:508.800px;width:820px;height:1.200px;background:#b4b7bd"></div>
<div class="abs" style="left:0;top:510px;width:860px;height:4px;background:#dae1f5"></div>
</body></html>
